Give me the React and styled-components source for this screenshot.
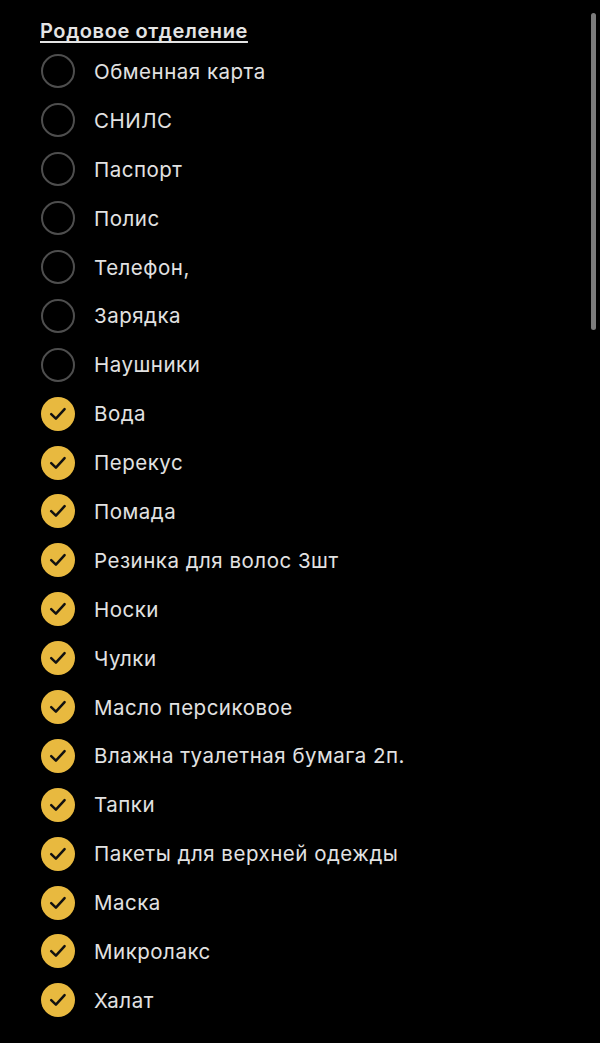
import React from "react";
import styled, { createGlobalStyle } from "styled-components";

const Global = createGlobalStyle`
  html, body { margin: 0; padding: 0; background: #000; }
  body { font-family: "Inter", "Noto Sans", sans-serif; -webkit-font-smoothing: antialiased; }
`;

const Page = styled.div`
  position: relative;
  width: 600px;
  height: 1043px;
  background: #000;
  overflow: hidden;
  box-sizing: border-box;
  padding: 17px 0 0 40px;
`;

const Title = styled.div`
  color: #e4e4e4;
  font-size: 20px;
  font-weight: 600;
  letter-spacing: 0.6px;
  text-decoration: underline;
  text-underline-offset: 3px;
  text-decoration-thickness: 1.5px;
  line-height: 28px;
  height: 30px;
`;

const List = styled.ul`
  list-style: none;
  margin: 0;
  padding: 0;
  display: flex;
  flex-direction: column;
`;

const Row = styled.li`
  display: flex;
  align-items: center;
  height: 48.9px;
  gap: 19px;
  padding-left: 1px;
`;

const Box = styled.span`
  width: 34px;
  height: 34px;
  border-radius: 50%;
  box-sizing: border-box;
  flex: none;
  display: flex;
  align-items: center;
  justify-content: center;
  background: ${(p) => (p.$checked ? "#e8b93f" : "transparent")};
  border: ${(p) => (p.$checked ? "none" : "2px solid #4e4e4e")};
`;

const Label = styled.span`
  color: #e2e2e2;
  font-size: 20.5px;
  letter-spacing: 0.5px;
`;

const Scrollbar = styled.div`
  position: absolute;
  right: 4px;
  top: 13px;
  width: 5px;
  height: 317px;
  border-radius: 3px;
  background: #7c7c7c;
`;

const Check = () => (
  <svg width="20" height="20" viewBox="0 0 20 20">
    <path d="M3.2 10.2 L7.9 14.7 L16.6 5.2" fill="none" stroke="#111" strokeWidth="2.5" strokeLinecap="round" strokeLinejoin="round" />
  </svg>
);

const items = [
  ["Обменная карта", false],
  ["СНИЛС", false],
  ["Паспорт", false],
  ["Полис", false],
  ["Телефон,", false],
  ["Зарядка", false],
  ["Наушники", false],
  ["Вода", true],
  ["Перекус", true],
  ["Помада", true],
  ["Резинка для волос 3шт", true],
  ["Носки", true],
  ["Чулки", true],
  ["Масло персиковое", true],
  ["Влажна туалетная бумага 2п.", true],
  ["Тапки", true],
  ["Пакеты для верхней одежды", true],
  ["Маска", true],
  ["Микролакс", true],
  ["Халат", true],
];

export default function App() {
  return (
    <>
      <Global />
      <Page>
        <Title>Родовое отделение</Title>
        <List>
          {items.map(([t, c]) => (
            <Row key={t}>
              <Box $checked={c}>{c && <Check />}</Box>
              <Label>{t}</Label>
            </Row>
          ))}
        </List>
        <Scrollbar />
      </Page>
    </>
  );
}
